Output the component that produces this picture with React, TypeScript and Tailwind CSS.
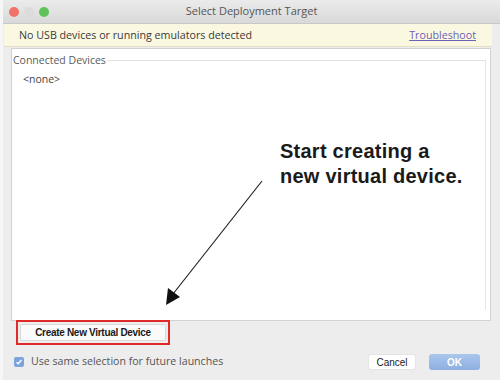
import React from "react";

export default function App() {
  return (
    <div className="w-[500px] h-[380px] bg-[#f6f6f6] pl-[3px] overflow-hidden" style={{ fontFamily: '"Open Sans", "Liberation Sans", sans-serif' }}>
      <div className="relative w-full h-full bg-[#ededed] flex flex-col">
        {/* Title bar */}
        <div className="h-[24px] flex items-center relative bg-gradient-to-b from-[#ebebeb] to-[#d9d9d9] border-b border-[#c8c8c8]">
          <div className="flex items-center gap-[5px] pl-[6px]">
            <span className="w-[10px] h-[10px] rounded-full bg-[#f0736a]" />
            <span className="w-[10px] h-[10px] rounded-full bg-[#dcdcdc]" />
            <span className="w-[10px] h-[10px] rounded-full bg-[#5fc25a]" />
          </div>
          <div className="absolute inset-0 flex items-center justify-center text-[11px] text-[#555]">Select Deployment Target</div>
        </div>
        {/* Banner */}
        <div className="h-[23px] mr-[8px] ml-[1px] bg-[#fbf8e2] border-b border-[#e3e0c8] flex items-center justify-between pl-[15px] pr-[16px] text-[10.7px] text-[#3a3a3a]">
          <span>No USB devices or running emulators detected</span>
          <span className="underline text-[#6a62b5]">Troubleshoot</span>
        </div>
        {/* Panel */}
        <div className="mt-[1px] ml-[8px] mr-[9px] h-[273px] bg-white border border-[#d2d2d2] pt-[5px] pr-[4px]">
          <div className="flex items-center h-[12px]">
            <span className="text-[10.5px] text-[#5a5a5a] leading-none pl-[1px]">Connected Devices</span>
            <div className="flex-1 border-t border-[#e2e2e2] ml-[2px]" />
          </div>
          <div className="border-r border-[#e6e6e6] h-[250px] -mt-[6px] pt-[12px] pl-[11px] text-[10.5px] text-[#444]">
            &lt;none&gt;
          </div>
        </div>
        {/* Create button */}
        <div className="ml-[13px] mt-[-1px] w-[154px] h-[25px] border-2 border-[#e02a2a] flex items-center px-[2px]">
          <div className="w-full h-[17px] bg-[#fafafa] border border-[#d8d8d8] rounded-[2px] flex items-center justify-center text-[10px] font-bold text-[#1a1a1a] tracking-[-0.3px]" style={{ fontFamily: '"Liberation Sans", Arial, sans-serif' }}>
            Create New Virtual Device
          </div>
        </div>
        {/* Bottom row */}
        <div className="flex items-center mt-[9px] h-[16px] pl-[11px] pr-[20px]">
          <span className="w-[10px] h-[10px] rounded-[2px] bg-[#7ba4dc] flex items-center justify-center">
            <svg width="8" height="8" viewBox="0 0 8 8"><path d="M1.5 4.2 L3.2 5.8 L6.5 2" stroke="white" strokeWidth="1.4" fill="none" /></svg>
          </span>
          <span className="ml-[7px] text-[10.6px] text-[#555]">Use same selection for future launches</span>
          <div className="flex-1" />
          <div className="w-[48px] h-[16px] bg-white border border-[#e4e4e4] rounded-[3px] flex items-center justify-center text-[10px] text-[#222]" style={{ fontFamily: '"Liberation Sans", Arial, sans-serif' }}>Cancel</div>
          <div className="ml-[13px] w-[51px] h-[16px] rounded-[3px] bg-gradient-to-b from-[#aac6ec] to-[#8eafe0] flex items-center justify-center text-[10px] font-bold text-white" style={{ fontFamily: '"Liberation Sans", Arial, sans-serif' }}>OK</div>
        </div>

        {/* Annotation overlay */}
        <div className="absolute left-[277px] top-[139px] text-[20px] font-bold leading-[25px] text-[#1a1a1a] tracking-[0.25px]" style={{ fontFamily: '"Liberation Sans", Arial, sans-serif' }}>
          <div>Start creating a</div>
          <div>new virtual device.</div>
        </div>
        <svg className="absolute left-0 top-0" width="497" height="380" viewBox="3 0 497 380">
          <line x1="262" y1="181" x2="173" y2="294" stroke="#222" strokeWidth="1.2" />
          <polygon points="166,305 168,288 180,297" fill="#111" />
        </svg>
      </div>
    </div>
  );
}
